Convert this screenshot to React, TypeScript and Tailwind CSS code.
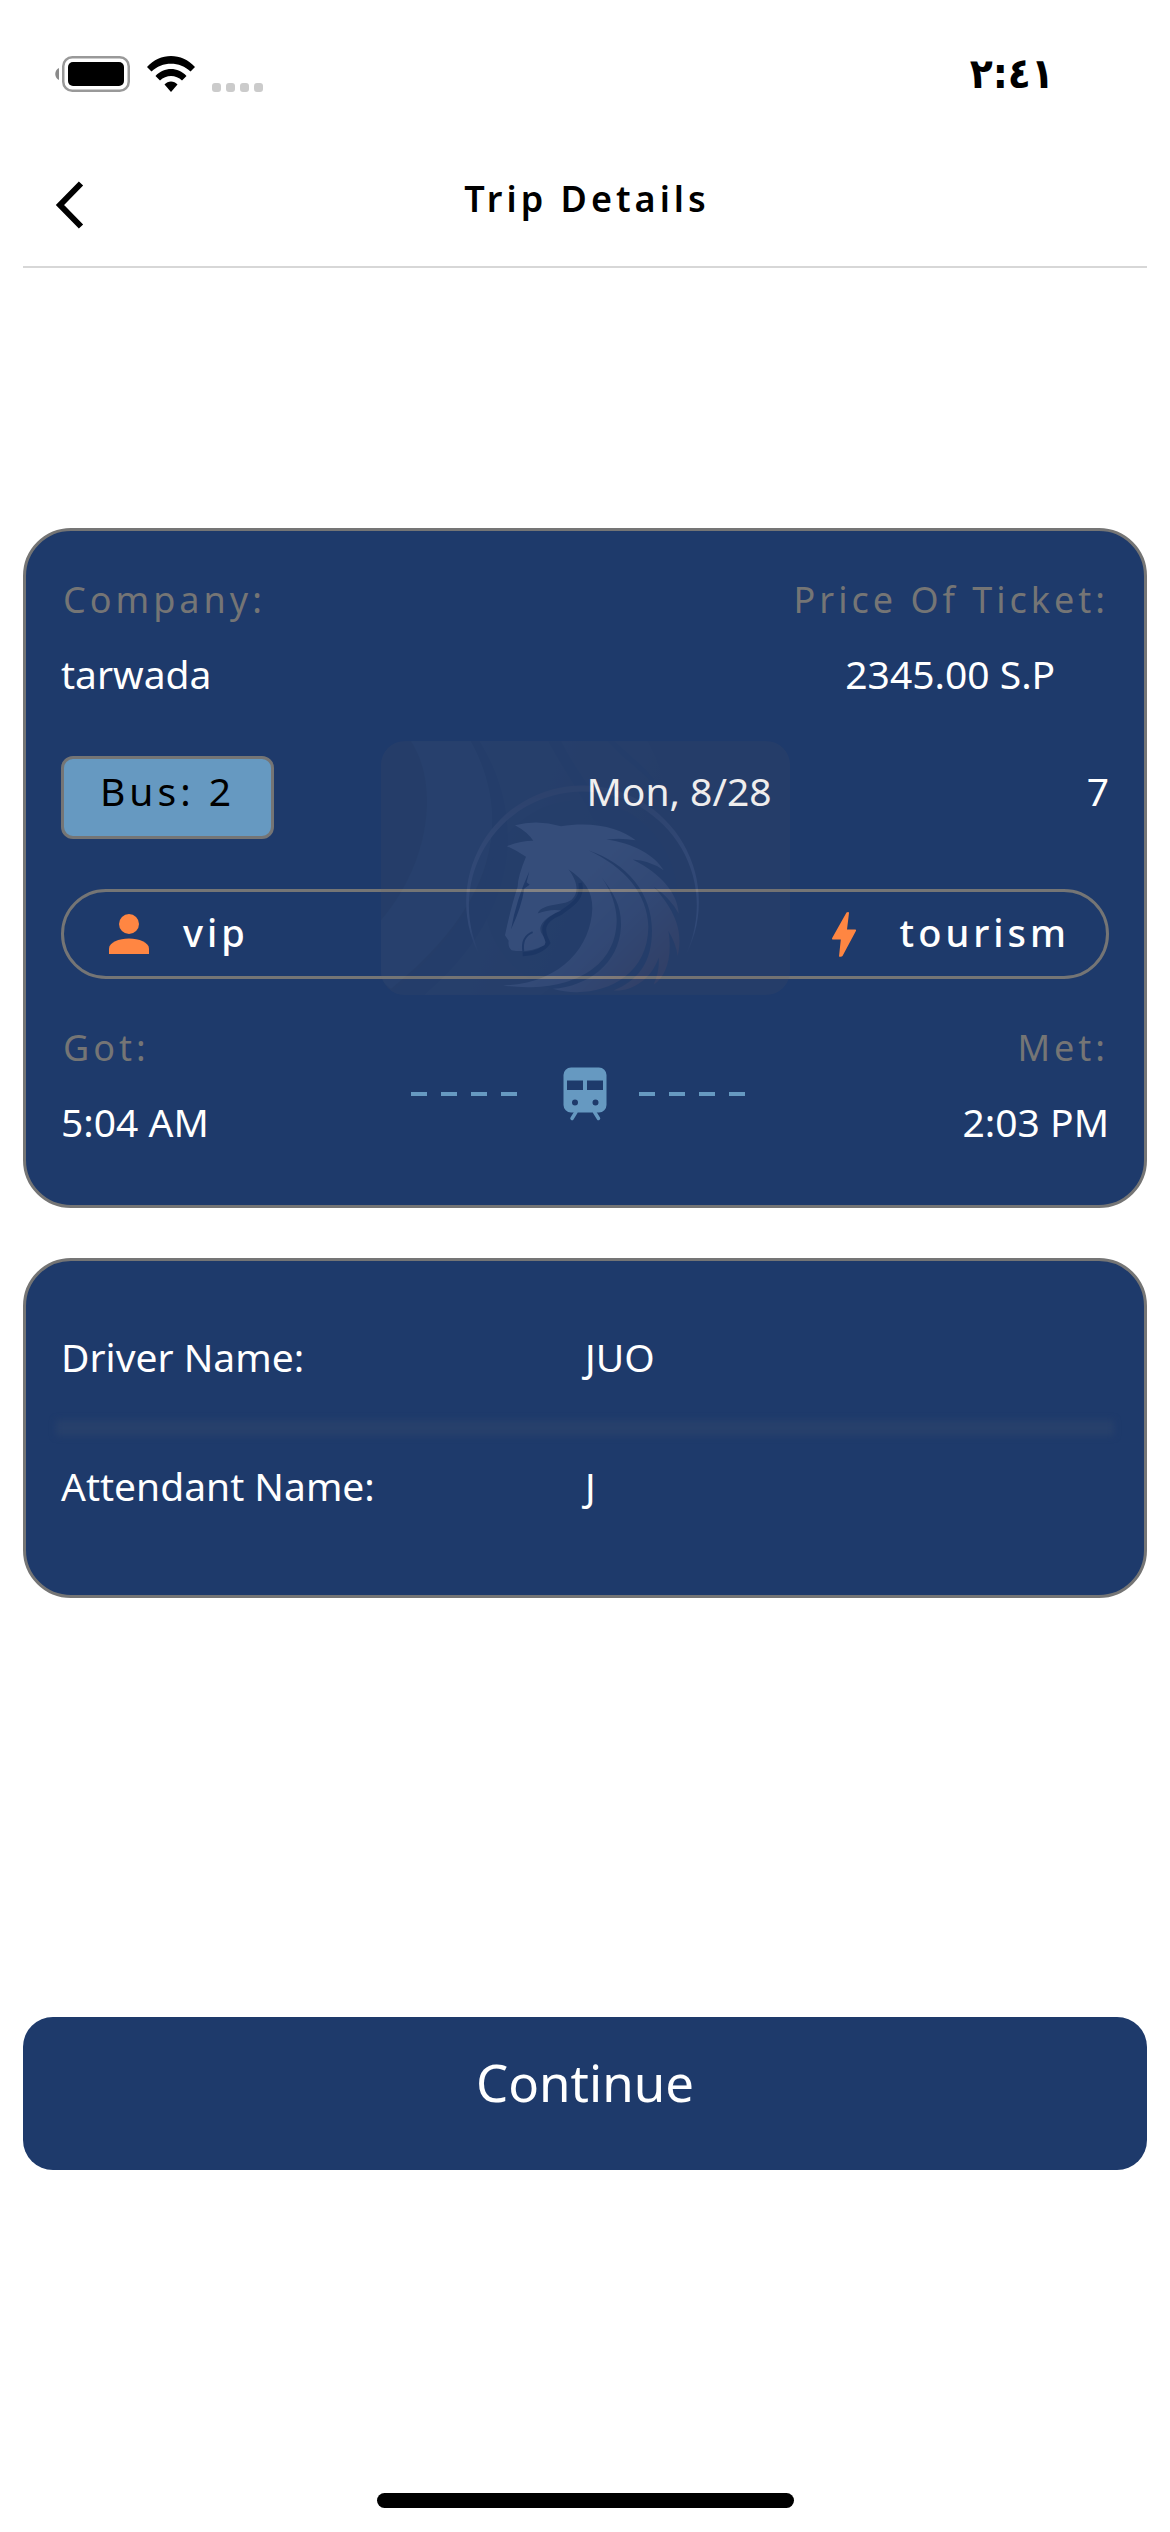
import React from "react";

function BatteryIcon() {
  return (
    <svg viewBox="0 0 75 36" className="h-9 w-[75px]" aria-label="Battery">
      <path d="M4 12C-1 14-1 22 4 24Z" fill="#8a8a8a" />
      <rect x="8.250" y="1.250" width="65.500" height="33.500" rx="9" fill="none" stroke="#999" strokeWidth="2.500" />
      <rect x="13" y="6" width="56" height="24" rx="5" fill="#000" />
    </svg>
  );
}

function WifiIcon() {
  return (
    <svg viewBox="0 0 48 36" className="h-9 w-12" aria-label="Wi-Fi">
      <path d="M0 11C13-3.600 35-3.600 48 11L43.500 15.500C33 5 15 5 4.500 15.500Z" />
      <path d="M8.500 20C17 10.800 31 10.800 39.500 20L35 24.500C29 18.500 19 18.500 13 24.500Z" />
      <path d="M17.500 28.500C21 24.600 27 24.600 30.500 28.500L24 36Z" />
    </svg>
  );
}

function ChevronIcon() {
  return (
    <svg viewBox="0 0 29 48" className="h-12 w-[29px]" fill="none" stroke="#000" strokeWidth="6">
      <path d="M26 2.500L5 24L26 45.500" />
    </svg>
  );
}

function PersonIcon() {
  return (
    <svg viewBox="0 0 40 40" className="size-10" fill="#ff8642">
      <circle cx="20" cy="10" r="10" />
      <path d="M0 40V34.500C0 28.500 10 24.500 20 24.500S40 28.500 40 34.500V40Z" />
    </svg>
  );
}

function BoltIcon() {
  return (
    <svg viewBox="0 0 24 45" className="h-[45px] w-6" fill="#ff8642">
      <path d="M14.500.500Q17-.500 17 1L15 17.500H23.500Q24.300 18 24 18.800L10.500 44Q9.500 45.200 7 44.500L8.800 27.500H.500Q-.200 27 .200 26Z" />
    </svg>
  );
}

function TrainIcon() {
  return (
    <svg viewBox="0 0 44 54" className="h-[54px] w-11" fill="#6699c1">
      <path
        fillRule="evenodd"
        d="M8 0.500H36A7.500 7.500 0 0 1 43.500 8V38A7.500 7.500 0 0 1 36 45.500H8A7.500 7.500 0 0 1 .500 38V8A7.500 7.500 0 0 1 8 .500ZM4 13.500V23H20V13.500ZM24 13.500V23H40V13.500ZM12 32.500A3 3 0 1 0 12 38.500A3 3 0 1 0 12 32.500ZM32.500 32.500A3 3 0 1 0 32.500 38.500A3 3 0 1 0 32.500 32.500Z"
      />
      <path d="M13 45L9 51.500M31.500 45L35.500 51.500" stroke="#6699c1" strokeWidth="3.500" strokeLinecap="round" />
    </svg>
  );
}

function Dashes() {
  return (
    <div className="flex gap-[14px]" aria-hidden="true">
      {[0, 1, 2, 3].map((i) => (
        <span key={i} className="h-[4px] w-4 bg-[#6699c1]" />
      ))}
    </div>
  );
}

function HorseEmblem() {
  return (
    <svg viewBox="60 63 1227 761" className="h-[254px] w-[409px] rounded-3xl opacity-10" aria-hidden="true">
      <defs>
        <linearGradient id="mane" gradientUnits="userSpaceOnUse" x1="650" y1="480" x2="910" y2="740">
          <stop offset="0" stopColor="#fff4ff" />
          <stop offset="0.5" stopColor="#dcc4cc" />
          <stop offset="1" stopColor="#d87850" />
        </linearGradient>
        <linearGradient id="ring" x1="0" y1="0" x2="0" y2="1">
          <stop offset="0" stopColor="#a88478" />
          <stop offset="0.3" stopColor="#d8c4d0" />
          <stop offset="0.6" stopColor="#d8d0e8" />
          <stop offset="0.72" stopColor="#d8d0e8" stopOpacity="0" />
        </linearGradient>
        <linearGradient id="fade" x1="0" y1="0" x2="1" y2="0.4">
          <stop offset="0" stopColor="#74787c" />
          <stop offset="1" stopColor="#685c5c" />
        </linearGradient>
      </defs>
      <rect x="60" y="63" width="1227" height="761" fill="#685c5c" />
      <path d="M355 63H860C900 130 940 250 900 320C830 500 700 720 540 824H190C480 560 480 260 355 63Z" fill="url(#fade)" />
      <path d="M60 600C200 440 240 200 150 63H330C450 280 420 540 90 806L60 780Z" fill="#747c7e" />
      <path d="M330 63H355C480 260 500 560 190 824H80C420 560 450 280 330 63Z" fill="#585c64" />
      <path d="M562 63H600C640 140 680 190 760 320L700 300C660 220 620 170 562 63Z" fill="#5a5c62" />
      <path d="M740 63H760C820 120 880 160 900 220C860 160 800 130 740 63Z" fill="#5a5c62" />
      <circle cx="660" cy="530" r="290" fill="#565c68" opacity="0.5" />
      <path
        fillRule="evenodd"
        fill="url(#ring)"
        d="M665 196A349 349 0 1 1 664 196ZM665 214A342 342 0 1 0 666 214Z"
      />
      <path
        d="M658 488C668 540 625 558 600 578C535 605 545 635 562 668Q540 700 485 702"
        fill="none"
        stroke="#10182c"
        strokeWidth="12"
      />
      <path
        fill="url(#mane)"
        d="M462 315Q530 298 600 318C700 302 780 325 824 360Q780 352 735 358C820 370 880 405 908 450Q865 420 815 418C900 460 950 520 953 580Q925 530 878 500C950 580 965 640 950 707Q945 670 922 632C935 710 915 770 878 793Q897 750 893 712C870 780 810 815 758 811C830 780 873 730 873 630C873 520 800 430 682 390C790 440 860 520 862 620C860 790 690 840 576 806C680 800 775 730 780 620C782 560 760 520 722 472C750 510 767 560 767 600C765 760 600 820 427 796C600 790 690 680 694 565C694 510 670 480 622 447C655 490 650 520 635 535C615 560 545 545 530 580Q570 565 600 571C530 600 535 630 542 640Q558 665 550 675Q500 700 452 690Q440 680 443 662L432 645Q450 560 470 500Q470 470 495 410Q465 390 438 378Q480 362 517 362Q500 335 462 315Z"
      />
      <path d="M505 453Q465 540 450 628Q482 560 490 505L506 494L497 486Z" fill="#38405a" />
      <path d="M487 695Q480 650 515 636" fill="none" stroke="#38405a" strokeWidth="6" />
    </svg>
  );
}

function Label({ children }: { children: React.ReactNode }) {
  return <dt className="pl-[2px] text-[36px] leading-[56px] tracking-[4px] text-[#757575]">{children}</dt>;
}

function Value({ children }: { children: React.ReactNode }) {
  return <dd className="text-[39px] leading-[56px] text-white">{children}</dd>;
}

export default function App() {
  return (
    <div className="flex min-h-screen flex-col bg-white font-['Noto_Sans',sans-serif] text-black">
      <div className="flex h-[148px] items-center justify-between pr-[116px] pl-[55px]">
        <div className="flex items-center gap-[17px]">
          <BatteryIcon />
          <WifiIcon />
          <div className="flex gap-[5px] self-end" aria-label="No signal">
            {[0, 1, 2, 3].map((i) => (
              <span key={i} className="size-[9px] rounded-[3px] bg-[#cbcbcb]" />
            ))}
          </div>
        </div>
        <time
          lang="ar"
          className="font-['DejaVu_Sans_Condensed','DejaVu_Sans',sans-serif] text-[42px] leading-none font-bold"
        >
          ٢:٤١
        </time>
      </div>

      <header className="mx-[23px] grid h-[120px] grid-cols-[1fr_auto_1fr] items-center border-b-2 border-[#d7d7d7] px-8">
        <button type="button" aria-label="Back" className="justify-self-start pb-1">
          <ChevronIcon />
        </button>
        <h1 className="pb-4 pl-1 text-[36px] leading-[56px] font-semibold tracking-[4px]">Trip Details</h1>
      </header>

      <main className="flex flex-col px-[23px]">
        <section className="relative mt-[260px] rounded-[48px] border-3 border-[#757575] bg-[#1e3a6b] px-[35px] pt-[41px] pb-[55px]">
          <dl className="flex justify-between">
            <div className="flex flex-col gap-[18px]">
              <Label>Company:</Label>
              <Value>tarwada</Value>
            </div>
            <div className="flex flex-col items-center gap-[18px]">
              <Label>Price Of Ticket:</Label>
              <Value>2345.00 S.P</Value>
            </div>
          </dl>

          <div className="mt-[54px] grid grid-cols-[1fr_auto_1fr] items-baseline text-[39px] leading-[64px] text-white">
            <span className="justify-self-start rounded-xl border-3 border-[#757575] bg-[#6699c1] px-9 pb-[13px] tracking-[4px] text-black">
              Bus: 2
            </span>
            <span className="pl-[188px]">Mon, 8/28</span>
            <span className="justify-self-end">7</span>
          </div>

          <div className="mt-[50px] flex h-[90px] items-center justify-between rounded-full border-3 border-[#757575] px-9 text-[38px] leading-[56px] font-medium tracking-[4px] text-white">
            <div className="flex items-center gap-[34px] pl-[9px]">
              <PersonIcon />
              <span className="pb-1">vip</span>
            </div>
            <div className="flex items-center gap-11">
              <BoltIcon />
              <span className="pb-1">tourism</span>
            </div>
          </div>

          <div className="mt-[41px] grid grid-cols-[1fr_auto_1fr] items-center">
            <dl className="flex flex-col gap-[18px]">
              <Label>Got:</Label>
              <Value>5:04 AM</Value>
            </dl>
            <div className="flex items-center pt-[18px] pr-[15px]">
              <Dashes />
              <div className="pr-8 pl-[46px]">
                <TrainIcon />
              </div>
              <Dashes />
            </div>
            <dl className="flex flex-col gap-[18px] text-right">
              <Label>Met:</Label>
              <Value>2:03 PM</Value>
            </dl>
          </div>

          <div className="pointer-events-none absolute inset-0 flex items-center justify-center">
            <HorseEmblem />
          </div>
        </section>

        <section className="mt-[50px] rounded-[48px] border-3 border-[#757575] bg-[#1e3a6b] px-[35px] pt-[68px] pb-[81px]">
          <dl className="grid grid-cols-2">
            <Value>Driver Name:</Value>
            <Value>JUO</Value>
            <div className="col-span-2 -mx-[5px] mt-[35px] mb-[22px] h-4 bg-[#27406b] blur-[3px]" />
            <Value>Attendant Name:</Value>
            <Value>J</Value>
          </dl>
        </section>

        <button
          type="button"
          className="mt-[419px] rounded-[30px] bg-[#1e3a6b] pt-[25px] pb-12 text-[51px] leading-[80px] text-white"
        >
          Continue
        </button>
      </main>

      <div className="mt-auto flex justify-center pb-6">
        <div className="h-[15px] w-[417px] rounded-full bg-black" />
      </div>
    </div>
  );
}
